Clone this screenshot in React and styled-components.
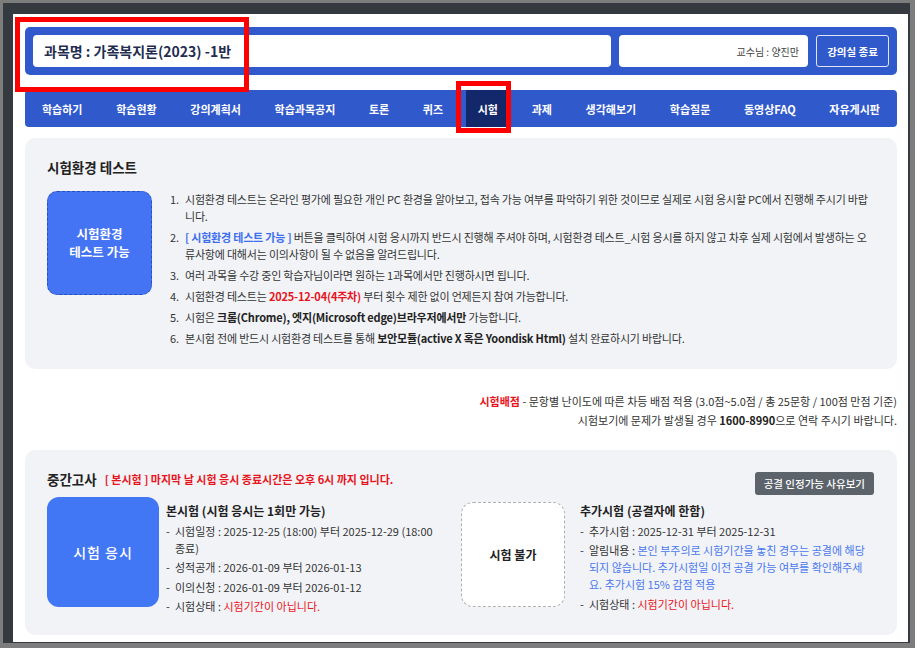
import React from "react";
import styled, { createGlobalStyle } from "styled-components";

const GlobalStyle = createGlobalStyle`
  html, body { margin: 0; padding: 0; background: #ffffff; }
  body { font-family: "Noto Sans CJK KR", "Noto Sans", sans-serif; color: #333; }
  * { box-sizing: border-box; }
`;

const Frame = styled.div`
  width: 915px;
  height: 648px;
  border-style: solid;
  border-color: #7d7d7d;
  border-width: 3px 5px 5px 3px;
`;

const Window = styled.div`
  width: 100%;
  height: 100%;
  border-style: solid;
  border-color: #343a40;
  border-width: 11px 2px 1px 10px;
  background: #fff;
  position: relative;
  overflow: hidden;
`;

const Content = styled.div`
  padding: 13px 11px 0 12px;
  display: flex;
  flex-direction: column;
`;

const HeaderBar = styled.div`
  background: #3059cc;
  border-radius: 5px;
  height: 48px;
  padding: 8px;
  display: flex;
  gap: 8px;
`;

const CourseBox = styled.div`
  flex: 1;
  background: #fff;
  border-radius: 4px;
  display: flex;
  align-items: center;
  padding-left: 11px;
  font-size: 14px;
  font-weight: 700;
  color: #1f2d50;
`;

const ProfBox = styled.div`
  width: 189px;
  background: #fff;
  border-radius: 4px;
  display: flex;
  align-items: center;
  justify-content: flex-end;
  padding-right: 9px;
  font-size: 10px;
  color: #444;
`;

const ExitButton = styled.button`
  width: 73px;
  background: transparent;
  border: 1px solid rgba(255, 255, 255, 0.85);
  border-radius: 3px;
  color: #fff;
  font-family: inherit;
  font-size: 10.5px;
  font-weight: 700;
  padding: 0;
`;

const Nav = styled.nav`
  margin-top: 15px;
  height: 37px;
  background: #3059cc;
  border-radius: 4px;
  display: flex;
  justify-content: space-between;
  align-items: stretch;
  padding: 0 6px;
`;

const NavItem = styled.div`
  display: flex;
  align-items: center;
  padding: 0 11px 0 ${(p) => (p.$active ? 12 : 11)}px;
  color: #fff;
  font-size: 11px;
  font-weight: 700;
  background: ${(p) => (p.$active ? "#13286a" : "transparent")};
`;

const Card = styled.section`
  background: #f2f3f7;
  border-radius: 10px;
  margin-top: ${(p) => p.$mt || 0}px;
  padding: ${(p) => p.$pad};
`;

const CardTitle = styled.h2`
  margin: 0;
  font-size: 13.5px;
  font-weight: 700;
  color: #222;
  line-height: 20px;
`;

const TestRow = styled.div`
  display: flex;
  gap: 18px;
  margin-top: 14px;
`;

const TestButton = styled.div`
  flex: none;
  width: 105px;
  height: 104px;
  background: #4474f3;
  border: 1px dashed #2a4fb8;
  border-radius: 10px;
  display: flex;
  align-items: center;
  justify-content: center;
  text-align: center;
  color: #fff;
  font-size: 12.5px;
  font-weight: 700;
  line-height: 18px;
`;

const List = styled.ol`
  list-style: none;
  margin: 0;
  padding: 0;
  flex: 1;
  display: flex;
  flex-direction: column;
  gap: 4px;
`;

const ListItem = styled.li`
  display: flex;
  font-size: 11px;
  line-height: 17px;
  color: #333;
  letter-spacing: -0.2px;
`;

const Num = styled.span`
  flex: none;
  width: 15px;
`;

const Em = styled.b`
  font-weight: 700;
  color: ${(p) => p.$color || "#222"};
`;

const Notes = styled.div`
  margin-top: 23px;
  text-align: right;
  font-size: 11px;
  line-height: 19px;
  color: #333;
`;

const ExamHeader = styled.div`
  display: flex;
  justify-content: space-between;
  align-items: flex-start;
  height: 28px;
`;

const TitleGroup = styled.div`
  display: flex;
  align-items: center;
  gap: 8px;
`;

const Notice = styled.span`
  color: #e8141c;
  font-size: 11px;
  font-weight: 700;
`;

const ReasonButton = styled.button`
  margin-top: 3px;
  height: 23px;
  padding: 0 9px;
  background: #5c636a;
  color: #fff;
  border: none;
  border-radius: 3px;
  font-family: inherit;
  font-size: 10.5px;
  font-weight: 500;
`;

const Columns = styled.div`
  display: grid;
  grid-template-columns: 398px 1fr;
  gap: 16px;
`;

const Column = styled.div`
  display: flex;
  gap: ${(p) => p.$gap}px;
`;

const ExamBox = styled.div`
  flex: none;
  width: ${(p) => p.$w}px;
  height: ${(p) => p.$h}px;
  margin-top: ${(p) => p.$mt || 0}px;
  border-radius: 12px;
  display: flex;
  align-items: center;
  justify-content: center;
  background: ${(p) => (p.$disabled ? "#fff" : "#4176f5")};
  border: ${(p) => (p.$disabled ? "1px dashed #b0b0b0" : "none")};
  color: ${(p) => (p.$disabled ? "#222" : "#fff")};
  font-size: ${(p) => (p.$disabled ? "12px" : "14px")};
  font-weight: ${(p) => (p.$disabled ? 700 : 500)};
  letter-spacing: ${(p) => (p.$disabled ? "0" : "1px")};
`;

const Info = styled.div`
  flex: 1;
  padding-top: 5px;
`;

const InfoTitle = styled.div`
  font-size: 12px;
  font-weight: 700;
  color: #222;
  line-height: 18px;
  margin-bottom: 2px;
`;

const InfoLine = styled.div`
  display: flex;
  font-size: 11px;
  line-height: 17px;
  color: #333;
  margin-top: 2.5px;
`;

const Dash = styled.span`
  flex: none;
  width: 9px;
`;

const Accent = styled.span`
  color: ${(p) => p.$color};
`;

const Annotation = styled.div`
  position: absolute;
  left: ${(p) => p.$x}px;
  top: ${(p) => p.$y}px;
  width: ${(p) => p.$w}px;
  height: ${(p) => p.$h}px;
  border: 5px solid #ff0000;
  pointer-events: none;
`;

const navItems = [
  "학습하기",
  "학습현황",
  "강의계획서",
  "학습과목공지",
  "토론",
  "퀴즈",
  "시험",
  "과제",
  "생각해보기",
  "학습질문",
  "동영상FAQ",
  "자유게시판",
];

export default function App() {
  return (
    <>
      <GlobalStyle />
      <Frame>
        <Window>
          <Content>
            <HeaderBar>
              <CourseBox>과목명 : 가족복지론(2023) -1반</CourseBox>
              <ProfBox>교수님 : 양진만</ProfBox>
              <ExitButton>강의실 종료</ExitButton>
            </HeaderBar>

            <Nav>
              {navItems.map((n) => (
                <NavItem key={n} $active={n === "시험"}>
                  {n}
                </NavItem>
              ))}
            </Nav>

            <Card $mt={11} $pad="19px 23px 22px 22px">
              <CardTitle>시험환경 테스트</CardTitle>
              <TestRow>
                <TestButton>
                  시험환경
                  <br />
                  테스트 가능
                </TestButton>
                <List>
                  <ListItem>
                    <Num>1.</Num>
                    <span>
                      시험환경 테스트는 온라인 평가에 필요한 개인 PC 환경을 알아보고, 접속 가능 여부를 파악하기 위한 것이므로 실제로 시험 응시할 PC에서 진행해 주시기 바랍니다.
                    </span>
                  </ListItem>
                  <ListItem>
                    <Num>2.</Num>
                    <span>
                      <Em $color="#3d6ef0">[ 시험환경 테스트 가능 ]</Em> 버튼을 클릭하여 시험 응시까지 반드시 진행해 주셔야 하며, 시험환경 테스트_시험 응시를 하지 않고 차후 실제 시험에서 발생하는 오류사항에 대해서는 이의사항이 될 수 없음을 알려드립니다.
                    </span>
                  </ListItem>
                  <ListItem>
                    <Num>3.</Num>
                    <span>여러 과목을 수강 중인 학습자님이라면 원하는 1과목에서만 진행하시면 됩니다.</span>
                  </ListItem>
                  <ListItem>
                    <Num>4.</Num>
                    <span>
                      시험환경 테스트는 <Em $color="#e8141c">2025-12-04(4주차)</Em> 부터 횟수 제한 없이 언제든지 참여 가능합니다.
                    </span>
                  </ListItem>
                  <ListItem>
                    <Num>5.</Num>
                    <span>
                      시험은 <Em>크롬(Chrome), 엣지(Microsoft edge)브라우저에서만</Em> 가능합니다.
                    </span>
                  </ListItem>
                  <ListItem>
                    <Num>6.</Num>
                    <span>
                      본시험 전에 반드시 시험환경 테스트를 통해 <Em>보안모듈(active X 혹은 Yoondisk Html)</Em> 설치 완료하시기 바랍니다.
                    </span>
                  </ListItem>
                </List>
              </TestRow>
            </Card>

            <Notes>
              <div>
                <Em $color="#e8141c">시험배점</Em> - 문항별 난이도에 따른 차등 배점 적용 (3.0점~5.0점 / 총 25문항 / 100점 만점 기준)
              </div>
              <div>
                시험보기에 문제가 발생될 경우 <Em>1600-8990</Em>으로 연락 주시기 바랍니다.
              </div>
            </Notes>

            <Card $mt={20} $pad="19px 23px 20px 22px">
              <ExamHeader>
                <TitleGroup>
                  <CardTitle>중간고사</CardTitle>
                  <Notice>[ 본시험 ] 마지막 날 시험 응시 종료시간은 오후 6시 까지 입니다.</Notice>
                </TitleGroup>
                <ReasonButton>공결 인정가능 사유보기</ReasonButton>
              </ExamHeader>
              <Columns>
                <Column $gap={7}>
                  <ExamBox $w={112} $h={110}>시험 응시</ExamBox>
                  <Info>
                    <InfoTitle>본시험 (시험 응시는 1회만 가능)</InfoTitle>
                    <InfoLine>
                      <Dash>-</Dash>
                      <span>시험일정 : 2025-12-25 (18:00) 부터 2025-12-29 (18:00 종료)</span>
                    </InfoLine>
                    <InfoLine>
                      <Dash>-</Dash>
                      <span>성적공개 : 2026-01-09 부터 2026-01-13</span>
                    </InfoLine>
                    <InfoLine>
                      <Dash>-</Dash>
                      <span>이의신청 : 2026-01-09 부터 2026-01-12</span>
                    </InfoLine>
                    <InfoLine>
                      <Dash>-</Dash>
                      <span>
                        시험상태 : <Accent $color="#e8141c">시험기간이 아닙니다.</Accent>
                      </span>
                    </InfoLine>
                  </Info>
                </Column>
                <Column $gap={15}>
                  <ExamBox $w={104} $h={105} $mt={5} $disabled>
                    시험 불가
                  </ExamBox>
                  <Info>
                    <InfoTitle>추가시험 (공결자에 한함)</InfoTitle>
                    <InfoLine>
                      <Dash>-</Dash>
                      <span>추가시험 : 2025-12-31 부터 2025-12-31</span>
                    </InfoLine>
                    <InfoLine>
                      <Dash>-</Dash>
                      <span>
                        알림내용 : <Accent $color="#4a78ee">본인 부주의로 시험기간을 놓친 경우는 공결에 해당되지 않습니다. 추가시험일 이전 공결 가능 여부를 확인해주세요. 추가시험 15% 감점 적용</Accent>
                      </span>
                    </InfoLine>
                    <InfoLine>
                      <Dash>-</Dash>
                      <span>
                        시험상태 : <Accent $color="#e8141c">시험기간이 아닙니다.</Accent>
                      </span>
                    </InfoLine>
                  </Info>
                </Column>
              </Columns>
            </Card>
          </Content>
          <Annotation $x={2} $y={3} $w={234} $h={75} />
          <Annotation $x={443} $y={67} $w={55} $h={52} />
        </Window>
      </Frame>
    </>
  );
}
